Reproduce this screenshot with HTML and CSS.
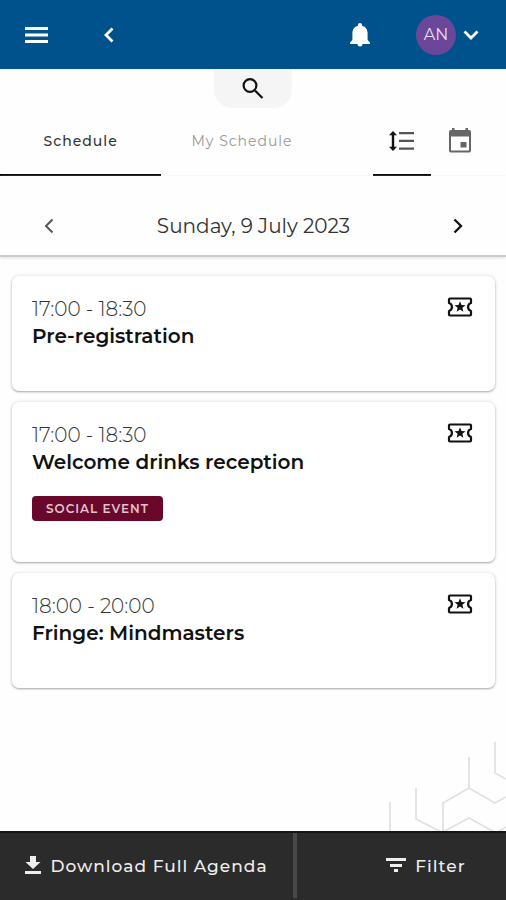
FILE: index.html
```html
<!DOCTYPE html>
<html lang="en">
<head>
<meta charset="utf-8">
<meta name="viewport" content="width=device-width, initial-scale=1">
<title>Schedule</title>
<link rel="stylesheet" href="styles.css">
</head>
<body>
<header class="topbar">
  <button class="icon-btn menu-btn" type="button" aria-label="Menu">
    <svg width="24" height="18" viewBox="0 0 24 18" fill="currentColor"><path d="M0 1h23v3H0zM0 7.500h23v3H0zM0 14h23v3H0z"/></svg>
  </button>
  <button class="icon-btn back-btn" type="button" aria-label="Back">
    <svg width="10" height="16" viewBox="0 0 10 16" fill="none" stroke="currentColor" stroke-width="2.800"><path d="M8.500 1.500 2 8l6.500 6.500"/></svg>
  </button>
  <button class="icon-btn bell-btn" type="button" aria-label="Notifications">
    <svg width="20" height="26" viewBox="0 0 20 26" fill="currentColor"><path d="M10 1c1.200 0 2 .8 2 2v.8c3.700.9 5.600 4 5.600 7.600V18l2.400 2.500V22H0v-1.500L2.400 18v-6.600C2.400 7.800 4.300 4.700 8 3.800V3c0-1.200.8-2 2-2zM7.500 22h5a2.500 2.500 0 0 1-5 0z"/></svg>
  </button>
  <button class="icon-btn account" type="button" aria-label="Account AN">
    <span class="avatar">AN</span>
    <svg width="16" height="10" viewBox="0 0 16 10" fill="none" stroke="currentColor" stroke-width="2.800"><path d="M1.500 1.500 8 8l6.500-6.500"/></svg>
  </button>
</header>

<button class="search" type="button" aria-label="Search">
  <svg width="24" height="24" viewBox="0 0 24 24" fill="none" stroke="currentColor" stroke-width="2.200"><circle cx="9" cy="8.500" r="6.400"/><path d="m14 13.500 7.500 7.500"/></svg>
</button>

<nav class="tabs">
  <a class="tab active" href="#schedule">Schedule</a>
  <a class="tab" href="#my-schedule">My Schedule</a>
  <a class="view active" href="#list" aria-label="List view">
    <svg width="26" height="22" viewBox="0 0 26 22" fill="currentColor"><path d="m4 1 4 4.200H5.200v11.600H8L4 21l-4-4.200h2.800V5.200H0z"/><path fill="#555" d="M10 2h15v2.300H10zM10 9.800h15v2.300H10zM10 17.500h15v2.300H10z"/></svg>
  </a>
  <a class="view" href="#calendar" aria-label="Calendar view">
    <svg width="24" height="26" viewBox="0 0 24 26" fill="#666"><path fill-rule="evenodd" d="M4 0h2.500v2h11V0H20v2h1a2 2 0 0 1 2 2v18.500a2 2 0 0 1-2 2H3a2 2 0 0 1-2-2V4a2 2 0 0 1 2-2h1zM3 8.500v14h18v-14z"/><path d="M12.500 14h6v5.500h-6z"/></svg>
  </a>
</nav>

<div class="date-bar">
  <button class="icon-btn prev" type="button" aria-label="Previous day">
    <svg width="10" height="16" viewBox="0 0 10 16" fill="none" stroke="currentColor" stroke-width="2"><path d="M8.500 1.500 2 8l6.500 6.500"/></svg>
  </button>
  <h1 class="date">Sunday, 9 July 2023</h1>
  <button class="icon-btn" type="button" aria-label="Next day">
    <svg width="10" height="16" viewBox="0 0 10 16" fill="none" stroke="currentColor" stroke-width="2.300"><path d="M1.500 1.500 8 8l-6.500 6.500"/></svg>
  </button>
</div>

<svg class="symbols" aria-hidden="true">
  <symbol id="ticket" viewBox="0 0 26 20">
    <path fill="none" stroke="currentColor" stroke-width="2.200" stroke-linejoin="round" d="M3 1.500h20q1 0 1 1V6a4.200 4.200 0 0 0 0 8v3.500q0 1-1 1H3q-1 0-1-1V14a4.200 4.200 0 0 0 0-8V2.500q0-1 1-1z"/>
    <path fill="currentColor" d="m13 4.200 1.500 3.700 4 .3-3.100 2.600 1 3.900L13 12.600l-3.400 2.100 1-3.900-3.100-2.600 4-.3z"/>
  </symbol>
</svg>

<main class="sessions">
  <article class="card">
    <div>
      <p class="time">17:00 - 18:30</p>
      <h2 class="title">Pre-registration</h2>
    </div>
    <svg class="ticket" width="26" height="20"><use href="#ticket"/></svg>
  </article>
  <article class="card">
    <div>
      <p class="time">17:00 - 18:30</p>
      <h2 class="title">Welcome drinks reception</h2>
      <span class="tag">SOCIAL EVENT</span>
    </div>
    <svg class="ticket" width="26" height="20"><use href="#ticket"/></svg>
  </article>
  <article class="card">
    <div>
      <p class="time">18:00 - 20:00</p>
      <h2 class="title">Fringe: Mindmasters</h2>
    </div>
    <svg class="ticket" width="26" height="20"><use href="#ticket"/></svg>
  </article>
  <svg class="pattern" width="140" height="90" viewBox="0 0 140 90" fill="none" stroke="#e2e2e2" stroke-width="1.800" aria-hidden="true"><path d="M24 61v29M50 47v31l27 14V62l26-15 26 15 11-6M103 16v31M129 1v31l11 6M75 92l28-15 27 15 10-6"/></svg>
</main>

<footer class="actions">
  <button class="action download" type="button">
    <svg width="16" height="20" viewBox="0 0 16 20" fill="currentColor"><path d="M5 0h6v6h4.500L8 13 .5 6H5zM0 15h16v3H0z"/></svg>
    Download Full Agenda
  </button>
  <button class="action filter" type="button">
    <svg width="20" height="16" viewBox="0 0 20 16" fill="currentColor"><path d="M0 0h20v3H0zM4 6h12v3H4zM8 11h4v3H8z"/></svg>
    Filter
  </button>
</footer>
</body>
</html>
```
FILE: styles.css
```css
* {
  box-sizing: border-box;
}

body {
  margin: 0;
  min-height: 100vh;
  display: flex;
  flex-direction: column;
  background: #fefefe;
  color: #111;
  font-family: Montserrat, Inter, "Open Sans", sans-serif;
}

button {
  border: 0;
  padding: 0;
  font: inherit;
  cursor: pointer;
}

a {
  color: inherit;
  text-decoration: none;
}

svg {
  display: block;
  flex: none;
}

h1,
h2,
p {
  margin: 0;
}

.icon-btn {
  background: none;
  color: inherit;
}

.topbar {
  display: flex;
  align-items: center;
  height: 69px;
  padding: 0 27px 0 25px;
  background: #00528c;
  color: #fff;
}

.back-btn {
  margin-left: 55px;
}

.bell-btn {
  margin-left: auto;
}

.account {
  display: flex;
  align-items: center;
  gap: 7px;
  margin-left: 46px;
}

.avatar {
  width: 40px;
  height: 40px;
  border-radius: 50%;
  background: #6b4799;
  color: #e8def4;
  font-size: 16px;
  line-height: 40px;
  text-align: center;
}

.search {
  display: flex;
  align-items: center;
  justify-content: center;
  align-self: center;
  width: 78px;
  height: 39px;
  border-radius: 0 0 18px 18px;
  background: #f5f5f5;
  color: #111;
}

.tabs {
  display: flex;
  height: 68px;
  padding-right: 17px;
}

.tab,
.view {
  display: flex;
  align-items: center;
  justify-content: center;
  border-bottom: 2px solid transparent;
}

.tab {
  width: 33%;
  color: #999;
  font-size: 14px;
  letter-spacing: 1px;
}

.tab.active {
  color: #333;
  font-weight: 500;
}

.view {
  width: 58px;
}

.tab + .view {
  margin-left: auto;
}

.tab.active,
.view.active {
  border-bottom-color: #000;
}

.date-bar {
  display: flex;
  align-items: center;
  justify-content: space-between;
  height: 81px;
  padding: 20px 43px 0 44px;
  border-bottom: 2px solid #ccc;
  box-shadow: 0 1px 3px #ddd;
}

.prev {
  color: #555;
}

.date {
  color: #333;
  font-size: 20px;
  font-weight: 400;
}

.symbols {
  position: absolute;
  width: 0;
  height: 0;
}

.sessions {
  position: relative;
  flex: 1;
  display: flex;
  flex-direction: column;
  gap: 11px;
  padding: 19px 11px 20px 12px;
}

.card {
  display: flex;
  justify-content: space-between;
  padding: 19px 22px 41px 20px;
  border-radius: 7px;
  background: #fff;
  box-shadow: 0 1px 2px #aaa, 0 0 4px #e4e4e4;
}

.time {
  color: #333;
  font-size: 20px;
  font-weight: 300;
  line-height: 28px;
}

.title {
  font-size: 20px;
  font-weight: 600;
  line-height: 27px;
}

.ticket {
  margin-top: 2px;
}

.tag {
  display: inline-block;
  margin-top: 20px;
  padding: 0 14px;
  border-radius: 4px;
  background: #69082b;
  color: #e4c3cd;
  font-size: 12px;
  font-weight: 600;
  letter-spacing: 1px;
  line-height: 25px;
}

.pattern {
  position: absolute;
  right: 0;
  bottom: 0;
  z-index: -1;
}

.actions {
  display: grid;
  grid-template-columns: 297fr 209fr;
  height: 69px;
  padding-bottom: 2px;
  border-top: 2px solid #151515;
  background: #2b2b2b;
}

.action {
  display: flex;
  align-items: center;
  justify-content: center;
  gap: 9px;
  background: none;
  color: #eee;
  font-size: 17px;
  font-weight: 500;
  letter-spacing: 1px;
}

.download {
  border-right: 4px solid #484848;
}

.filter {
  padding-left: 49px;
}
```
